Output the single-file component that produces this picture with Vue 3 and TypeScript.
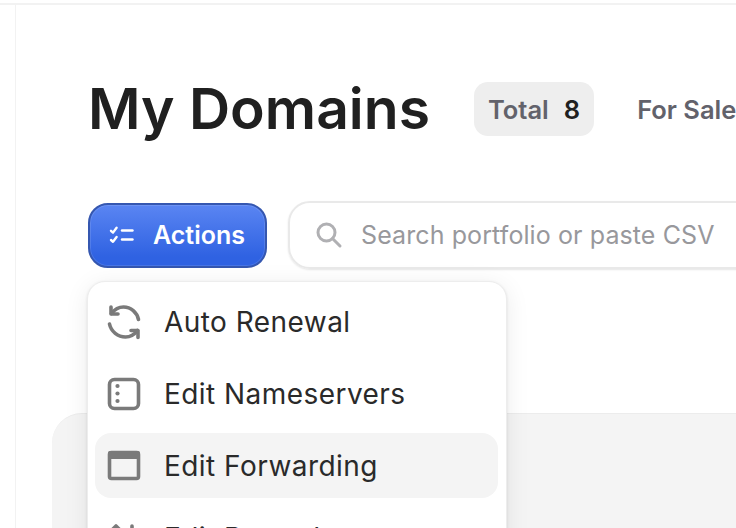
<template>
  <div class="page">
    <aside class="sidebar"></aside>
    <main class="main">
      <header class="head">
        <h1 class="title">My Domains</h1>
        <div class="tabs">
          <div v-for="tab in tabs" :key="tab.label" class="tab" :class="{ active: tab.active }">
            <span>{{ tab.label }}</span>
            <b v-if="tab.count !== undefined" class="count">{{ tab.count }}</b>
          </div>
        </div>
      </header>

      <div class="toolbar">
        <button class="actions" type="button">
          <svg width="26" height="20" viewBox="0 0 26 20" fill="none" stroke="#fff" stroke-width="2.4" stroke-linecap="round" stroke-linejoin="round">
            <path d="M2 5.8l2 1.8 3.6-4.8" />
            <path d="M2 15l2 1.8 3.6-4.8" />
            <path d="M13 5.5h10.5" />
            <path d="M13 14.5h10.5" />
          </svg>
          Actions
        </button>
        <div class="search">
          <svg width="30" height="30" viewBox="0 0 30 30" fill="none" stroke="#b0b0b3" stroke-width="3" stroke-linecap="round">
            <circle cx="12.5" cy="12.5" r="8.5" />
            <path d="M18.5 18.5l7.5 7.5" />
          </svg>
          <span class="placeholder">Search portfolio or paste CSV</span>
        </div>
      </div>

      <div class="panel"></div>

      <ul class="menu">
        <li v-for="item in menu" :key="item.label" class="menu-item" :class="{ hover: item.hover }">
          <svg width="36" height="36" viewBox="0 0 36 36" fill="none" stroke="#7a7a7a" stroke-width="3.6" stroke-linecap="round" stroke-linejoin="round">
            <template v-if="item.icon === 'renew'">
              <path d="M5.5 9.5C8.5 5.5 12.5 3 17.5 3C25 3 31 8.5 32.5 15.5" />
              <path d="M5 3v7h7" />
              <path d="M31.5 26.5C28.5 30.5 24.5 33 19.5 33C12 33 5 27.5 3.5 20" />
              <path d="M32 33.5v-7h-7" />
            </template>
            <template v-else-if="item.icon === 'ns'">
              <rect x="3.5" y="3.5" width="29" height="29" rx="5" />
              <circle cx="11.5" cy="10" r="2.1" fill="#7a7a7a" stroke="none" />
              <circle cx="11.5" cy="17.5" r="2.1" fill="#7a7a7a" stroke="none" />
              <circle cx="11.5" cy="25" r="2.1" fill="#7a7a7a" stroke="none" />
            </template>
            <template v-else-if="item.icon === 'fwd'">
              <rect x="3.5" y="4.5" width="29" height="26" rx="2" />
              <rect x="2" y="3" width="32" height="8" rx="2" fill="#7a7a7a" stroke="none" />
            </template>
            <template v-else>
              <path d="M10 30V7M4 12l6-6 6 6" />
              <path d="M26 6v23M20 24l6 6 6-6" />
            </template>
          </svg>
          <span>{{ item.label }}</span>
        </li>
      </ul>
    </main>
  </div>
</template>

<script setup lang="ts">
interface Tab {
  label: string;
  count?: number;
  active?: boolean;
}

interface MenuItem {
  label: string;
  icon: 'renew' | 'ns' | 'fwd' | 'records';
  hover?: boolean;
}

const tabs: Tab[] = [
  { label: 'Total', count: 8, active: true },
  { label: 'For Sale' },
];

const menu: MenuItem[] = [
  { label: 'Auto Renewal', icon: 'renew' },
  { label: 'Edit Nameservers', icon: 'ns' },
  { label: 'Edit Forwarding', icon: 'fwd', hover: true },
  { label: 'Edit Records', icon: 'records' },
];
</script>

<style>
html,
body {
  margin: 0;
  height: 100%;
  overflow: hidden;
  background: #fff;
}
</style>

<style scoped>
.page {
  display: flex;
  width: 736px;
  height: 528px;
  padding-top: 3px;
  overflow: hidden;
  box-sizing: border-box;
  font-family: Inter, 'Liberation Sans', sans-serif;
  color: #202020;
}

.sidebar {
  flex: none;
  width: 15px;
  border-top: 2px solid #f2f2f2;
  border-right: 1px solid #f2f2f2;
}

.main {
  position: relative;
  flex: none;
  width: 1000px;
  padding: 74px 0 0 36px;
  box-sizing: border-box;
  border-top: 2px solid #f2f2f2;
}

.head {
  display: flex;
  align-items: center;
  gap: 44px;
  height: 60px;
  padding-left: 36px;
}

.title {
  margin: 0;
  font-size: 57px;
  line-height: 60px;
  font-weight: 600;
  white-space: nowrap;
}

.tabs {
  display: flex;
  align-items: center;
  gap: 19px;
}

.tab {
  display: flex;
  align-items: center;
  gap: 15px;
  height: 54px;
  padding: 0 24px;
  border-radius: 14px;
  font-size: 25.5px;
  font-weight: 600;
  color: #62626b;
  white-space: nowrap;
}

.tab.active {
  background: #eeeeee;
  padding: 0 14px;
}

.count {
  font-weight: 600;
  color: #202020;
}

.toolbar {
  display: flex;
  align-items: center;
  gap: 21px;
  margin-top: 62px;
  padding-left: 36px;
}

.actions {
  display: flex;
  align-items: center;
  gap: 18px;
  flex: none;
  width: 179px;
  height: 65px;
  padding: 0 0 0 19px;
  box-sizing: border-box;
  border: 2px solid #3557b0;
  border-radius: 20px;
  background: linear-gradient(180deg, #5a85f2 0%, #2f62e2 85%);
  box-shadow: inset 0 0 0 1px rgba(255, 255, 255, 0.12);
  color: #fff;
  font-family: inherit;
  font-size: 25px;
  font-weight: 600;
}

.search {
  display: flex;
  align-items: center;
  gap: 17px;
  flex: none;
  width: 700px;
  height: 68px;
  padding-left: 24px;
  box-sizing: border-box;
  border: 2px solid #e9e9e9;
  border-radius: 22px;
  box-shadow: 0 1px 2px rgba(0, 0, 0, 0.1);
}

.placeholder {
  font-size: 25px;
  letter-spacing: 0.1px;
  color: #98989c;
  white-space: nowrap;
}

.panel {
  height: 400px;
  margin-top: 144px;
  border-top: 1px solid #ececec;
  border-radius: 30px 0 0 0;
  background: #f4f4f4;
}

.menu {
  position: absolute;
  top: 276px;
  left: 71px;
  width: 420px;
  margin: 0;
  padding: 7px 8px 7px 7px;
  box-sizing: border-box;
  list-style: none;
  background: #fff;
  border: 1px solid #ededed;
  border-radius: 18px;
  box-shadow: 0 1px 3px rgba(0, 0, 0, 0.1), 0 4px 24px rgba(0, 0, 0, 0.08);
}

.menu-item {
  display: flex;
  align-items: center;
  gap: 22px;
  height: 65px;
  margin-bottom: 7px;
  padding-left: 11px;
  border-radius: 16px;
  font-size: 28px;
  letter-spacing: 0.45px;
  white-space: nowrap;
  color: #2a2a2a;
}

.menu-item.hover {
  background: #f4f4f4;
}
</style>
